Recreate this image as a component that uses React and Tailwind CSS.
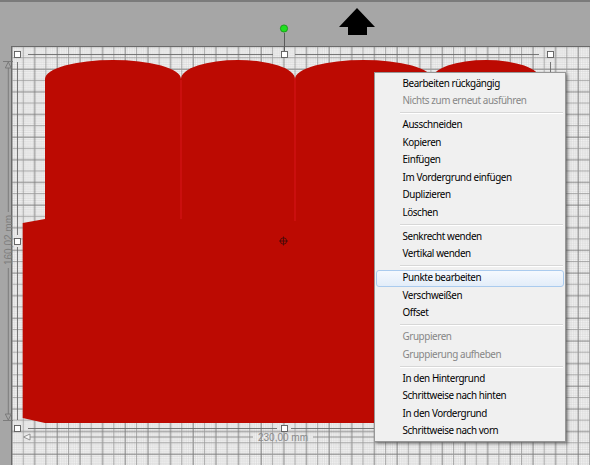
import React from "react";

const S = 22.65;
const M = S / 10;

function GridPattern() {
  const lines = [];
  for (let i = 0; i < 10; i++) {
    const p = (i + 0.5) * M;
    const major = i === 0;
    const mid = i === 5;
    const color = major ? "#7a7a7a" : mid ? "#979797" : "#d6d6d6";
    const w = major ? 1 : mid ? 0.9 : 0.6;
    lines.push({ p, color, w, order: major || mid ? 1 : 0, key: i });
  }
  lines.sort((a, b) => a.order - b.order);
  return (
    <pattern
      id="grid"
      x={12 - 0.5 * M}
      y={46.5 - 0.5 * M}
      width={S}
      height={S}
      patternUnits="userSpaceOnUse"
    >
      <rect x="0" y="0" width={S} height={S} fill="#f5f5f5" />
      {lines.map((l) => (
        <g key={l.key}>
          <line x1={l.p} y1="0" x2={l.p} y2={S} stroke={l.color} strokeWidth={l.w} />
          <line x1="0" y1={l.p} x2={S} y2={l.p} stroke={l.color} strokeWidth={l.w} />
        </g>
      ))}
    </pattern>
  );
}

function Handle({ x, y }) {
  return <rect x={x - 3} y={y - 3} width="6" height="6" fill="#ffffff" stroke="#5a5a5a" strokeWidth="0.9" />;
}

const bumps = [
  [45, 181],
  [181, 295],
  [295, 432],
  [432, 540],
];

function shapePath() {
  let d = "M 45 219 L 22.7 223 L 22.7 418 L 45 423 L 540 423 L 540 79 ";
  for (let i = bumps.length - 1; i >= 0; i--) {
    const [a, b] = bumps[i];
    const rx = (b - a) / 2;
    d += `A ${rx} 19 0 0 0 ${a} 79 `;
  }
  d += "Z";
  return d;
}

function Canvas() {
  return (
    <svg width="590" height="463" viewBox="0 2 590 463" className="block">
      <defs>
        <GridPattern />
      </defs>
      <polygon points="357,8 375,27 367,27 367,35 348,35 348,27 339,27" fill="#000000" />

      <rect x="11" y="46" width="579" height="419" fill="url(#grid)" />
      <line x1="11.5" y1="46" x2="11.5" y2="465" stroke="#6a6a6a" strokeWidth="1" />
      <line x1="11" y1="46.5" x2="590" y2="46.5" stroke="#6a6a6a" strokeWidth="1" />

      <path d={shapePath()} fill="#bc0a02" />
      <line x1="181" y1="80" x2="181" y2="219" stroke="#d8141a" strokeWidth="1" />
      <line x1="295" y1="78" x2="295" y2="221" stroke="#d8141a" strokeWidth="1" />

      <g stroke="#4a0a08" strokeWidth="0.9" fill="none">
        <circle cx="283.5" cy="241" r="3.2" />
        <line x1="279" y1="241" x2="288" y2="241" />
        <line x1="283.5" y1="236.5" x2="283.5" y2="245.5" />
      </g>

      <line x1="284.5" y1="33" x2="284.5" y2="51" stroke="#5a5a5a" strokeWidth="1" />
      <circle cx="284" cy="28.5" r="3.6" fill="#1fe01f" stroke="#109010" strokeWidth="0.8" />

      <g stroke="#6a6a6a" strokeWidth="0.9">
        <line x1="28" y1="54.5" x2="273" y2="54.5" />
        <line x1="295" y1="54.5" x2="539" y2="54.5" />
        <line x1="550.5" y1="62" x2="550.5" y2="73" />
        <line x1="17.5" y1="62" x2="17.5" y2="235" />
        <line x1="17.5" y1="247" x2="17.5" y2="420" />
        <line x1="28" y1="428.5" x2="277" y2="428.5" />
        <line x1="291" y1="428.5" x2="380" y2="428.5" />
      </g>

      <g stroke="#8a8a8a" strokeWidth="0.9" fill="none">
        <line x1="30" y1="437" x2="253" y2="437" />
        <line x1="313" y1="437" x2="380" y2="437" />
        <polygon points="23.5,437 30,434 30,440" fill="#f5f5f5" />
      </g>
      <text
        x="283"
        y="440.5"
        textAnchor="middle"
        fontFamily="'Liberation Sans', Arial, sans-serif"
        fontSize="10"
        fill="#8a8a8a"
      >
        230,00 mm
      </text>

      <g stroke="#777777" strokeWidth="0.9" fill="none">
        <line x1="3" y1="61.5" x2="13" y2="61.5" />
        <polygon points="8.3,62 5.3,68 11.3,68" fill="#a6a6a6" />
        <line x1="8.3" y1="68" x2="8.3" y2="212" />
        <line x1="8.3" y1="268" x2="8.3" y2="414" />
        <polygon points="8.3,420 5.3,414 11.3,414" fill="#a6a6a6" />
        <line x1="3" y1="420.5" x2="13" y2="420.5" />
      </g>
      <text
        x="0"
        y="0"
        transform="translate(11.8 240) rotate(-90)"
        textAnchor="middle"
        fontFamily="'Liberation Sans', Arial, sans-serif"
        fontSize="10"
        fill="#7e7e7e"
      >
        160,02 mm
      </text>

      <Handle x={17.5} y={54.5} />
      <Handle x={284.5} y={54.5} />
      <Handle x={550.5} y={54.5} />
      <Handle x={17.5} y={241.5} />
      <Handle x={17.5} y={428.5} />
      <Handle x={284.5} y={428.5} />
    </svg>
  );
}

const menu = [
  [
    { t: "Bearbeiten rückgängig" },
    { t: "Nichts zum erneut ausführen", d: true },
  ],
  [
    { t: "Ausschneiden" },
    { t: "Kopieren" },
    { t: "Einfügen" },
    { t: "Im Vordergrund einfügen" },
    { t: "Duplizieren" },
    { t: "Löschen" },
  ],
  [{ t: "Senkrecht wenden" }, { t: "Vertikal wenden" }],
  [{ t: "Punkte bearbeiten", h: true }, { t: "Verschweißen" }, { t: "Offset" }],
  [
    { t: "Gruppieren", d: true },
    { t: "Gruppierung aufheben", d: true },
  ],
  [
    { t: "In den Hintergrund" },
    { t: "Schrittweise nach hinten" },
    { t: "In den Vordergrund" },
    { t: "Schrittweise nach vorn" },
  ],
];

function ContextMenu() {
  return (
    <div className="absolute left-[374px] top-[72px] w-[192px] h-[370px] bg-[#f0f0f0] border border-[#979797] shadow-[2px_2px_3px_rgba(0,0,0,0.35)] pt-[2px] pb-px px-px font-['Noto_Sans','Open_Sans',sans-serif] text-[9.9px] tracking-[-0.42px]">
      {menu.map((group, gi) => (
        <div key={gi}>
          {gi > 0 && (
            <div className="h-[6.5px] flex flex-col justify-center pl-[24px] pr-px">
              <div className="h-px bg-[#d7d7d7]" />
              <div className="h-px bg-[#ffffff]" />
            </div>
          )}
          {group.map((it) => (
            <div
              key={it.t}
              className={
                it.h
                  ? "h-[17.5px] flex items-center pl-[25.5px] rounded-[3px] border border-[#aacbee] bg-gradient-to-b from-[#f5f9fe] to-[#e3edf9] leading-none"
                  : "h-[17.5px] flex items-center pl-[25.5px] border border-transparent leading-none"
              }
            >
              <span className={it.d ? "text-[#868686]" : "text-[#000000]"}>{it.t}</span>
            </div>
          ))}
        </div>
      ))}
    </div>
  );
}

export default function App() {
  return (
    <div className="relative w-[590px] h-[465px] overflow-hidden bg-[#a6a6a6] flex flex-col">
      <div className="h-[2px] bg-[#7b7b7b] shrink-0" />
      <Canvas />
      <ContextMenu />
    </div>
  );
}
